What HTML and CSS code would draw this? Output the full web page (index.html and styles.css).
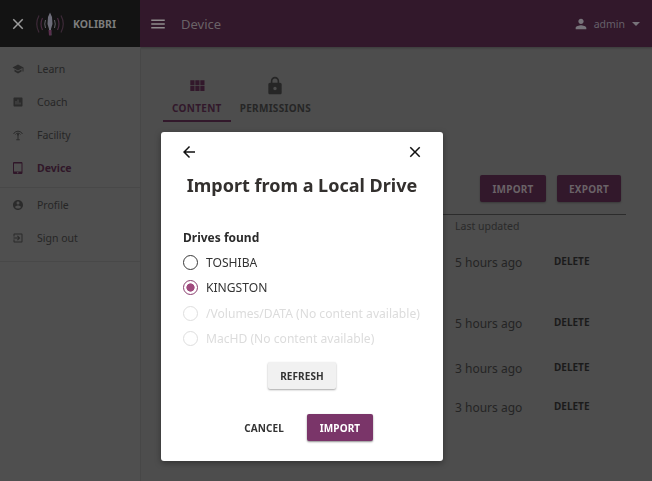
FILE: index.html
```html
<!DOCTYPE html>
<html lang="en">
<head>
<meta charset="utf-8">
<title>Device</title>
<link rel="stylesheet" href="styles.css">
</head>
<body>
<div class="app">
  <header class="topbar">
    <div class="brand">
      <svg class="icon brand-close" viewBox="0 0 24 24"><path d="M19 6.41L17.59 5 12 10.59 6.41 5 5 6.41 10.59 12 5 17.59 6.41 19 12 13.41 17.59 19 19 17.59 13.41 12z"/></svg>
      <svg class="logo" viewBox="0 0 30 24" fill="none">
        <path d="M7.500 6Q4.500 12 7.500 18M22.500 6Q25.500 12 22.500 18" stroke="#4a2b42" stroke-width="1.200"/>
        <path d="M4 3.500Q-.5 12 4 20.500M26 3.500Q30.500 12 26 20.500" stroke="#3d2a38" stroke-width="1.200"/>
        <path d="M10.500 8Q9 12 10.500 16M19.500 8Q21 12 19.500 16" stroke="#5f5f66"/>
        <path d="M15 .5L17 5 17.500 12 16 17 16.500 23.500 14 22 14 17 12.500 12 13 5Z" fill="#6d6d7a"/>
        <path d="M13.500 18L16.500 18 16 23.500 14 23.500Z" fill="#5a2f4e"/>
      </svg>
      <span class="brand-name">KOLIBRI</span>
    </div>
    <div class="bar">
      <svg class="icon bar-menu" viewBox="0 0 24 24"><path d="M3 18h18v-2H3v2zm0-5h18v-2H3v2zm0-7v2h18V6H3z"/></svg>
      <span class="bar-title">Device</span>
      <div class="user">
        <svg class="icon user-icon" viewBox="0 0 24 24"><path d="M12 12c2.210 0 4-1.790 4-4s-1.790-4-4-4-4 1.790-4 4 1.790 4 4 4zm0 2c-2.670 0-8 1.340-8 4v2h16v-2c0-2.660-5.330-4-8-4z"/></svg>
        <span class="user-name">admin</span>
        <span class="caret"></span>
      </div>
    </div>
  </header>
  <div class="body">
    <nav class="side">
      <ul class="nav-group nav-first">
        <li class="nav-item"><svg class="icon" viewBox="0 0 24 24"><path d="M5 13.180v4L12 21l7-3.820v-4L12 17l-7-3.820zM12 3L1 9l11 6 9-4.910V17h2V9L12 3z"/></svg>Learn</li>
        <li class="nav-item"><svg class="icon" viewBox="0 0 24 24"><path d="M19 3H5c-1.100 0-2 .9-2 2v14c0 1.100.9 2 2 2h14c1.100 0 2-.9 2-2V5c0-1.100-.9-2-2-2zM9 17H7v-7h2v7zm4 0h-2V7h2v10zm4 0h-2v-4h2v4z"/></svg>Coach</li>
        <li class="nav-item"><svg class="icon" viewBox="0 0 24 24"><path class="tower" d="M3 10a10 10 0 0 1 18 0M7 11a6 6 0 0 1 10 0M12 11v10M8.500 21.500h7"/><circle cx="12" cy="11" r="2"/></svg>Facility</li>
        <li class="nav-item is-active"><svg class="icon" viewBox="0 0 24 24"><path d="M18.500 0h-14C3.120 0 2 1.120 2 2.500v19C2 22.880 3.120 24 4.500 24h14c1.380 0 2.500-1.120 2.500-2.500v-19C21 1.120 19.880 0 18.500 0zm-7 23c-.83 0-1.500-.67-1.500-1.500s.67-1.500 1.500-1.500 1.500.67 1.500 1.500-.67 1.500-1.500 1.500zm7.500-4H4V3h15v16z"/></svg>Device</li>
      </ul>
      <ul class="nav-group nav-second">
        <li class="nav-item"><svg class="icon" viewBox="0 0 24 24"><path d="M12 2C6.480 2 2 6.480 2 12s4.480 10 10 10 10-4.480 10-10S17.520 2 12 2zm0 3c1.660 0 3 1.340 3 3s-1.340 3-3 3-3-1.340-3-3 1.340-3 3-3zm0 14.200c-2.500 0-4.710-1.280-6-3.220.03-1.990 4-3.080 6-3.080 1.990 0 5.970 1.090 6 3.080-1.290 1.940-3.500 3.220-6 3.220z"/></svg>Profile</li>
        <li class="nav-item"><svg class="icon" viewBox="0 0 24 24"><path d="M10.090 15.590L11.500 17l5-5-5-5-1.410 1.410L12.670 11H3v2h9.670l-2.580 2.590zM19 3H5c-1.110 0-2 .9-2 2v4h2V5h14v14H5v-4H3v4c0 1.100.89 2 2 2h14c1.100 0 2-.9 2-2V5c0-1.100-.9-2-2-2z"/></svg>Sign out</li>
      </ul>
    </nav>
    <main class="main">
      <div class="tabs">
        <div class="tab is-current">
          <svg class="icon tab-icon" viewBox="0 0 24 24"><path d="M4 11h5V5H4v6zm0 7h5v-6H4v6zm6 0h5v-6h-5v6zm6 0h5v-6h-5v6zm-6-7h5V5h-5v6zm6-6v6h5V5h-5z"/></svg>
          <span>CONTENT</span>
        </div>
        <div class="tab">
          <svg class="icon tab-icon" viewBox="0 0 24 24"><path d="M18 8h-1V6c0-2.760-2.240-5-5-5S7 3.240 7 6v2H6c-1.100 0-2 .9-2 2v10c0 1.100.9 2 2 2h12c1.100 0 2-.9 2-2V10c0-1.100-.9-2-2-2zm-6 9c-1.100 0-2-.9-2-2s.9-2 2-2 2 .9 2 2-.9 2-2 2zm3.100-9H8.900V6c0-1.710 1.390-3.100 3.100-3.100 1.710 0 3.100 1.390 3.100 3.100v2z"/></svg>
          <span>PERMISSIONS</span>
        </div>
      </div>
      <div class="actions">
        <span class="dim-btn">IMPORT</span>
        <span class="dim-btn">EXPORT</span>
      </div>
      <div class="table">
        <div class="thead">Last updated</div>
        <div class="row row-1"><span class="when">5 hours ago</span><span class="del">DELETE</span></div>
        <div class="row row-2"><span class="when">5 hours ago</span><span class="del">DELETE</span></div>
        <div class="row row-3"><span class="when">3 hours ago</span><span class="del">DELETE</span></div>
        <div class="row row-4"><span class="when">3 hours ago</span><span class="del">DELETE</span></div>
      </div>
    </main>
  </div>
</div>
<div class="scrim">
  <section class="modal">
    <div class="modal-top">
      <svg class="icon modal-icon" viewBox="0 0 24 24"><path d="M20 11H7.830l5.590-5.590L12 4l-8 8 8 8 1.410-1.410L7.830 13H20v-2z"/></svg>
      <svg class="icon modal-icon" viewBox="0 0 24 24"><path d="M19 6.410L17.590 5 12 10.590 6.410 5 5 6.410 10.590 12 5 17.590 6.410 19 12 13.410 17.590 19 19 17.590 13.410 12z"/></svg>
    </div>
    <h1 class="modal-title">Import from a Local Drive</h1>
    <div class="drives">
      <div class="drives-label">Drives found</div>
      <div class="radio"><span class="dot"></span>TOSHIBA</div>
      <div class="radio is-on"><span class="dot"></span>KINGSTON</div>
      <div class="radio is-off"><span class="dot"></span>/Volumes/DATA (No content available)</div>
      <div class="radio is-off"><span class="dot"></span>MacHD (No content available)</div>
    </div>
    <div class="refresh-wrap"><button class="btn btn-light">REFRESH</button></div>
    <div class="modal-foot">
      <button class="btn btn-flat">CANCEL</button>
      <button class="btn btn-primary">IMPORT</button>
    </div>
  </section>
</div>
</body>
</html>
```
FILE: styles.css
```css
* { box-sizing: border-box; }
html, body { margin: 0; height: 100%; overflow: hidden; }
body { font-family: "Noto Sans", "Open Sans", sans-serif; background: #4d4d4d; color: #1f1f1f; }
.icon { display: block; fill: currentColor; flex: none; }
.app { display: flex; flex-direction: column; height: 481px; }

.topbar { display: flex; height: 47px; flex: none; box-shadow: 0 1px 2px rgba(0,0,0,.25); }
.brand { width: 140px; background: #131313; display: flex; align-items: center; padding-left: 9px; }
.brand-close { width: 18px; height: 18px; color: #9c9c9c; }
.logo { width: 30px; height: 24px; margin-left: 8px; }
.brand-name { font-size: 10.500px; font-weight: 700; color: #7c7c7c; margin-left: 8px; }
.bar { flex: 1; background: #32182b; display: flex; align-items: center; padding: 0 12px 0 9px; }
.bar-menu { width: 18px; height: 18px; color: #8e8a8c; }
.bar-title { font-size: 13px; margin-left: 14px; color: #6a6267; }
.user { margin-left: auto; display: flex; align-items: center; color: #66606a; }
.user-icon { width: 16px; height: 16px; color: #77737a; }
.user-name { font-size: 10.500px; margin-left: 5px; }
.caret { width: 0; height: 0; border: 4px solid transparent; border-top-color: #77737a; border-bottom: 0; margin-left: 7px; }

.body { display: flex; flex: 1; min-height: 0; }
.side { width: 141px; flex: none; border-right: 1px solid #474747; background: #4f4f4f; display: flex; flex-direction: column; }
.nav-group { list-style: none; margin: 0; border-bottom: 1px solid #484848; }
.nav-first { padding: 5px 0 3px; }
.nav-second { padding: 0 0 7px; }
.nav-item { display: flex; align-items: center; height: 33px; padding-left: 12px; font-size: 10.500px; color: #262626; }
.nav-item .icon { width: 12px; height: 12px; margin-right: 13px; color: #2b2b2b; }
.nav-item.is-active { color: #301729; font-weight: 700; }
.nav-item.is-active .icon { color: #301729; }
.tower { fill: none; stroke: currentColor; stroke-width: 2; }

.main { flex: 1; position: relative; padding: 27px 26px 0 22px; display: flex; flex-direction: column; }
.tabs { display: flex; }
.tab { height: 48px; padding: 0 9px; display: flex; flex-direction: column; align-items: center; font-size: 10px; font-weight: 700; letter-spacing: .3px; color: #262626; }
.tab-icon { width: 20px; height: 20px; margin-top: 2px; margin-bottom: 5px; }
.tab.is-current { color: #32182b; border-bottom: 2px solid #32182b; }
.actions { display: flex; justify-content: flex-end; gap: 11px; margin-top: 53px; padding-right: 5px; }
.dim-btn { height: 27px; width: 66px; display: flex; align-items: center; justify-content: center; background: #32182b; border-radius: 2px; font-size: 10px; font-weight: 700; letter-spacing: .2px; color: #6a6267; box-shadow: 0 1px 2px rgba(0,0,0,.25); }
.dim-btn + .dim-btn { width: 64px; }
.table { margin-top: 12px; border-top: 1px solid #2c2c2c; padding-left: 292px; }
.thead { font-size: 10.500px; color: #2a2a2a; padding-top: 4px; height: 22px; line-height: 15px; }
.row { display: flex; align-items: center; font-size: 12px; color: #242424; height: 22px; }
.when { width: 99px; }
.del { font-size: 10px; font-weight: 700; color: #1b1b1b; margin-top: -2px; }
.row-1 { height: 50px; }
.row-2 { margin-top: 25px; }
.row-3 { margin-top: 23px; }
.row-4 { margin-top: 17px; }

.scrim { position: fixed; inset: 0; display: flex; align-items: flex-start; justify-content: center; padding: 132px 48px 0 0; }
.modal { width: 282px; height: 329px; background: #fff; border-radius: 3px; box-shadow: 0 2px 6px rgba(0,0,0,.35); padding: 0 19px 0 22px; display: flex; flex-direction: column; color: #2b2b2b; }
.modal-top { display: flex; justify-content: space-between; padding-top: 11px; margin: 0 0 0 -3px; }
.modal-icon { width: 18px; height: 18px; color: #111; }
.modal-title { margin: 10px -19px 0 -22px; text-align: center; font-size: 18px; line-height: 28px; font-weight: 700; color: #33302e; }
.drives { margin-top: 30px; }
.drives-label { font-size: 12px; font-weight: 700; line-height: 17px; margin-bottom: 4px; }
.radio { display: flex; align-items: center; height: 25.300px; font-size: 12.100px; color: #333; }
.dot { width: 15px; height: 15px; border-radius: 50%; border: 1.500px solid #3a3a3a; margin-right: 8px; flex: none; }
.is-on .dot { border-color: #8a3f6f; background: radial-gradient(circle, #a04a7e 0 3.800px, #fff 4.400px); }
.is-off { color: #dcdcdc; }
.is-off .dot { border-color: #dedede; }
.refresh-wrap { display: flex; justify-content: center; margin-top: 11px; margin-left: -3px; }
.btn { font-family: inherit; font-size: 10px; font-weight: 700; border: 0; border-radius: 2px; padding: 0; height: 27px; letter-spacing: .1px; }
.btn-light { width: 68px; background: #f1f1f1; color: #333; box-shadow: 0 1px 2px rgba(0,0,0,.35); }
.modal-foot { display: flex; justify-content: flex-end; align-items: center; margin-top: 25px; padding-right: 51px; }
.btn-flat { background: none; color: #333; width: 64px; margin-right: 11px; }
.btn-primary { width: 66px; background: #7a3569; color: #fff; box-shadow: 0 1px 2px rgba(0,0,0,.45); }
```
